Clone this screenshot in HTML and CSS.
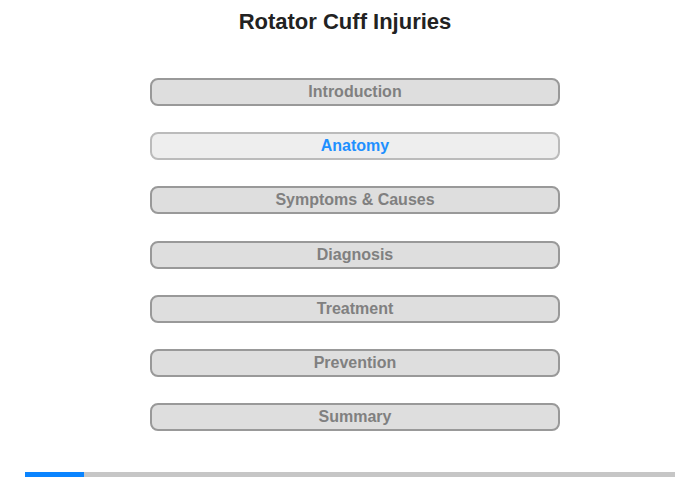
FILE: index.html
```html
<!DOCTYPE html>
<html>
<head>
<meta charset="utf-8">
<link rel="stylesheet" href="styles.css">
</head>
<body>
<div class="page">
  <h1 class="title">Rotator Cuff Injuries</h1>
  <nav class="menu">
    <div class="item">Introduction</div>
    <div class="item active">Anatomy</div>
    <div class="item">Symptoms &amp; Causes</div>
    <div class="item">Diagnosis</div>
    <div class="item">Treatment</div>
    <div class="item">Prevention</div>
    <div class="item">Summary</div>
  </nav>
  <div class="progress"><div class="bar" style="width:59px"></div></div>
</div>
</body>
</html>
```

FILE: styles.css
```css
html, body {
  margin: 0;
  padding: 0;
  background: #fff;
}
.page {
  width: 700px;
  height: 480px;
  font-family: "Liberation Sans", Arial, sans-serif;
  display: flex;
  flex-direction: column;
}
.title {
  margin: 9px 0 0 0;
  padding-right: 10px;
  text-align: center;
  font-size: 22px;
  font-weight: bold;
  color: #222;
  line-height: 26px;
}
.menu {
  margin: 43px 0 0 150px;
  width: 410px;
  display: flex;
  flex-direction: column;
  gap: 26.2px;
}
.item {
  box-sizing: border-box;
  height: 28px;
  border: 2px solid #999;
  border-radius: 8px;
  background: #dedede;
  color: #808080;
  font-size: 16px;
  font-weight: bold;
  text-align: center;
  line-height: 24px;
}
.item.active {
  background: #eee;
  border-color: #bbb;
  color: #1e90ff;
}
.progress {
  margin: 41px 0 0 25px;
  width: 650px;
  height: 5px;
  background: #c6c6c6;
}
.bar {
  height: 100%;
  background: #0a84ff;
}
```
